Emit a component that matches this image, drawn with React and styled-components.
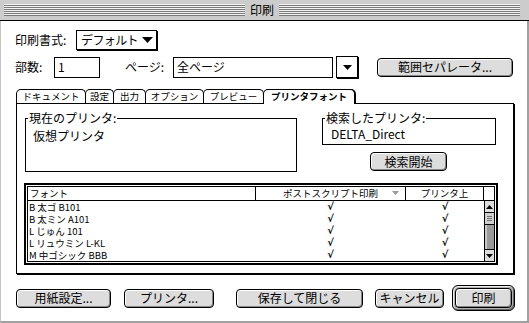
import React from "react";
import styled, { createGlobalStyle } from "styled-components";

const FONT = `"Noto Sans CJK JP", "Noto Sans", sans-serif`;

const GlobalStyle = createGlobalStyle`
  html, body { margin: 0; padding: 0; background: #fff; }
  body { font-family: ${FONT}; color: #000; }
  #root { width: 529px; height: 323px; }
  * { box-sizing: border-box; }
`;

const Window = styled.div`
  width: 529px;
  height: 323px;
  display: flex;
  flex-direction: column;
  overflow: hidden;
  background: #fff;
`;

const TitleBar = styled.div`
  flex: none;
  height: 21px;
  background: #cccccc;
  border-bottom: 1px solid #000;
  display: flex;
  align-items: center;
  padding: 0 9px 0 4px;
  gap: 3px;
`;

const Stripes = styled.div`
  flex: 1;
  height: 12px;
  background: repeating-linear-gradient(to bottom, #f2f2f2 0 1px, #7a7a7a 1px 2px);
`;

const Title = styled.div`
  font-size: 12px;
  line-height: 14px;
  padding: 0 2px;
`;

const Body = styled.div`
  flex: 1;
  display: flex;
  flex-direction: column;
  border-left: 1px solid #c4c4c4;
  border-right: 2px solid #a0a0a0;
  border-bottom: 2px solid #a0a0a0;
  padding: 9px 12px 0 14px;
`;

const Row = styled.div`
  display: flex;
  align-items: center;
  height: ${(p) => p.$h}px;
  margin-top: ${(p) => p.$mt || 0}px;
`;

const Label = styled.div`
  font-size: 12px;
  line-height: 14px;
  width: ${(p) => p.$w}px;
  margin-left: ${(p) => p.$ml || 0}px;
  flex: none;
  white-space: nowrap;
`;

const Popup = styled.div`
  width: 81px;
  height: 20px;
  border: 1px solid #000;
  box-shadow: 1px 1px 0 #000;
  display: flex;
  align-items: center;
  justify-content: space-between;
  padding: 0 3px 0 4px;
  font-size: 12px;
  line-height: 14px;
  letter-spacing: -0.6px;
  white-space: nowrap;
`;

const Field = styled.div`
  width: ${(p) => p.$w}px;
  height: 21px;
  flex: none;
  border: 1px solid #000;
  display: flex;
  align-items: center;
  padding: 0 3px;
  font-size: 12px;
  line-height: 14px;
`;

const ArrowBox = styled.div`
  width: 22px;
  height: 22px;
  margin-left: 3px;
  flex: none;
  border: 1px solid #000;
  box-shadow: 1px 1px 0 #000;
  display: flex;
  align-items: center;
  justify-content: center;
`;

const Button = styled.button`
  width: ${(p) => p.$w}px;
  height: ${(p) => p.$h || 19}px;
  margin-left: ${(p) => p.$ml || 0}px;
  margin-top: ${(p) => p.$mt || 0}px;
  flex: none;
  border: 1px solid #000;
  border-radius: 4px;
  background: #dddddd;
  box-shadow: inset 1px 1px 0 #fff, inset -1px -1px 0 #888;
  font-family: ${FONT};
  font-size: 12px;
  line-height: 14px;
  color: #000;
  padding: 0;
  display: flex;
  align-items: center;
  justify-content: center;
  white-space: nowrap;
`;

const DefaultRing = styled.div`
  margin-left: ${(p) => p.$ml || 0}px;
  border: 1px solid #000;
  border-radius: 6px;
  padding: 2px;
  background: #b0b0b0;
  box-shadow: inset 1px 1px 0 #eee, inset -1px -1px 0 #666;
  display: flex;
`;

const Tabs = styled.div`
  display: flex;
  height: 14px;
  margin-top: 11px;
  margin-left: 1px;
  align-items: flex-end;
`;

const Tab = styled.div`
  width: ${(p) => p.$w}px;
  height: ${(p) => (p.$active ? 15 : 14)}px;
  margin-right: -1px;
  margin-bottom: ${(p) => (p.$active ? -1 : 0)}px;
  border: 1px solid #000;
  border-bottom: none;
  border-radius: 5px 5px 0 0;
  background: #fff;
  position: relative;
  z-index: ${(p) => (p.$active ? 2 : 1)};
  font-size: 9.5px;
  font-weight: ${(p) => (p.$active ? 700 : 400)};
  line-height: 12px;
  text-align: center;
  white-space: nowrap;
  box-shadow: ${(p) => (p.$active ? "1px 0 0 #000" : "none")};
`;

const Panel = styled.div`
  height: 171px;
  width: 498px;
  margin-left: 1px;
  border: 1px solid #000;
  box-shadow: 1px 1px 0 #000;
  padding: 7px 0 0 7px;
  display: flex;
  flex-direction: column;
`;

const TopSection = styled.div`
  display: flex;
  align-items: flex-start;
  height: 61px;
`;

const Group = styled.fieldset`
  margin: 0 0 0 ${(p) => p.$ml || 0}px;
  padding: 0 0 0 2px;
  border: 1px solid #000;
  width: ${(p) => p.$w}px;
  height: ${(p) => p.$h}px;
  min-width: 0;
`;

const Legend = styled.legend`
  padding: 0 1px;
  font-size: 12px;
  line-height: 14px;
`;

const GroupText = styled.div`
  font-size: 12px;
  line-height: 14px;
  padding: ${(p) => p.$pt}px 0 0 ${(p) => p.$pl}px;
  white-space: nowrap;
`;

const RightCol = styled.div`
  display: flex;
  flex-direction: column;
  margin-left: 25px;
  width: 174px;
`;

const Table = styled.div`
  margin-top: 11px;
  width: 474px;
  height: 82px;
  border: 2px solid #000;
  padding: 1px;
`;

const TableInner = styled.div`
  border: 1px solid #000;
  height: 100%;
  display: flex;
  flex-direction: column;
`;

const Header = styled.div`
  display: grid;
  grid-template-columns: 227px 150px 78px 1fr;
  height: 14px;
  border-bottom: 1px solid #000;
  font-size: 9.5px;
  line-height: 13px;
`;

const HeadCell = styled.div`
  border-left: ${(p) => (p.$first ? "none" : "1px solid #000")};
  text-align: ${(p) => (p.$left ? "left" : "center")};
  padding-left: ${(p) => (p.$left ? 2 : 0)}px;
  position: relative;
  white-space: nowrap;
`;

const SortMark = styled.svg`
  position: absolute;
  right: 6px;
  top: 4px;
`;

const TableBody = styled.div`
  flex: 1;
  display: flex;
`;

const Rows = styled.div`
  flex: 1;
  display: grid;
  grid-template-columns: 227px 151px 78px;
  grid-auto-rows: 12px;
  font-size: 9.5px;
  line-height: 12px;
`;

const Cell = styled.div`
  text-align: left;
  padding-left: 1px;
  white-space: nowrap;
  overflow: hidden;
`;

const Check = styled.div`
  text-align: center;
  font-family: "DejaVu Sans", sans-serif;
  font-size: 10px;
  font-weight: 700;
  line-height: 12px;
  overflow: hidden;
`;

const Scrollbar = styled.div`
  width: 11px;
  border-left: 1px solid #000;
  display: flex;
  flex-direction: column;
  background: #a0a0a0;
`;

const ScrollArrow = styled.div`
  height: 12px;
  background: #dddddd;
  border-top: ${(p) => (p.$down ? "1px solid #000" : "none")};
  border-bottom: ${(p) => (p.$down ? "none" : "1px solid #000")};
  display: flex;
  align-items: center;
  justify-content: center;
`;

const Thumb = styled.div`
  height: 12px;
  background: #cfcfcf;
  border-bottom: 1px solid #000;
  display: flex;
  flex-direction: column;
  justify-content: center;
  gap: 1px;
  padding: 0 2px;
`;

const Grip = styled.div`
  height: 1px;
  background: #707070;
`;

const Track = styled.div`
  flex: 1;
  background: linear-gradient(to right, #c8c8c8 0 2px, #9a9a9a 2px);
`;

const Separator = styled.div`
  width: 1px;
  height: 30px;
  background: #000;
  margin-left: 14px;
`;

const Triangle = ({ w = 11, h = 6, color = "#000" }) => (
  <svg width={w} height={h} viewBox={`0 0 ${w} ${h}`}>
    <polygon points={`0,0 ${w},0 ${w / 2},${h}`} fill={color} />
  </svg>
);

const UpTri = ({ down }) => (
  <svg width="7" height="4" viewBox="0 0 7 4">
    <polygon points={down ? "0,0 7,0 3.5,4" : "0,4 7,4 3.5,0"} fill="#000" />
  </svg>
);

const fonts = [
  "B 太ゴ B101",
  "B 太ミン A101",
  "L じゅん 101",
  "L リュウミン L-KL",
  "M 中ゴシック BBB",
];

export default function App() {
  return (
    <>
      <GlobalStyle />
      <Window>
        <TitleBar>
          <Stripes />
          <Title>印刷</Title>
          <Stripes />
        </TitleBar>
        <Body>
          <Row $h={20}>
            <Label $w={61}>印刷書式:</Label>
            <Popup>
              <span>デフォルト</span>
              <Triangle w={11} h={6} />
            </Popup>
          </Row>
          <Row $h={22} $mt={6}>
            <Label $w={39}>部数:</Label>
            <Field $w={46}>1</Field>
            <Label $w={48} $ml={25}>ページ:</Label>
            <Field $w={160}>全ページ</Field>
            <ArrowBox>
              <Triangle w={9} h={5} />
            </ArrowBox>
            <Button $w={136} $ml={19}>範囲セパレータ...</Button>
          </Row>
          <Tabs>
            <Tab $w={70}>ドキュメント</Tab>
            <Tab $w={29}>設定</Tab>
            <Tab $w={33}>出力</Tab>
            <Tab $w={59}>オプション</Tab>
            <Tab $w={61}>プレビュー</Tab>
            <Tab $w={92} $active>プリンタフォント</Tab>
          </Tabs>
          <Panel>
            <TopSection>
              <Group $w={272} $h={61} $ml={1}>
                <Legend>現在のプリンタ:</Legend>
                <GroupText $pt={4} $pl={5}>仮想プリンタ</GroupText>
              </Group>
              <RightCol>
                <Group $w={174} $h={34}>
                  <Legend>検索したプリンタ:</Legend>
                  <GroupText $pt={2} $pl={6}>DELTA_Direct</GroupText>
                </Group>
                <Button $w={77} $h={19} $ml={48} $mt={7}>
                  検索開始
                </Button>
              </RightCol>
            </TopSection>
            <Table>
              <TableInner>
                <Header>
                  <HeadCell $first $left>フォント</HeadCell>
                  <HeadCell>
                    ポストスクリプト印刷
                    <SortMark width="7" height="4" viewBox="0 0 7 4">
                      <polygon points="0,0 7,0 3.5,4" fill="#999" />
                    </SortMark>
                  </HeadCell>
                  <HeadCell>プリンタ上</HeadCell>
                  <HeadCell />
                </Header>
                <TableBody>
                  <Rows>
                    {fonts.map((f) => (
                      <React.Fragment key={f}>
                        <Cell>{f}</Cell>
                        <Check>√</Check>
                        <Check>√</Check>
                      </React.Fragment>
                    ))}
                  </Rows>
                  <Scrollbar>
                    <ScrollArrow>
                      <UpTri />
                    </ScrollArrow>
                    <Thumb>
                      <Grip />
                      <Grip />
                      <Grip />
                    </Thumb>
                    <Track />
                    <ScrollArrow $down>
                      <UpTri down />
                    </ScrollArrow>
                  </Scrollbar>
                </TableBody>
              </TableInner>
            </Table>
          </Panel>
          <Row $h={30} $mt={9}>
            <Button $w={95} $ml={1}>用紙設定...</Button>
            <Button $w={90} $ml={13}>プリンタ...</Button>
            <Separator />
            <Button $w={127} $ml={8}>保存して閉じる</Button>
            <Button $w={69} $ml={12}>キャンセル</Button>
            <DefaultRing $ml={8}>
              <Button $w={57} $h={20}>印刷</Button>
            </DefaultRing>
          </Row>
        </Body>
      </Window>
    </>
  );
}
